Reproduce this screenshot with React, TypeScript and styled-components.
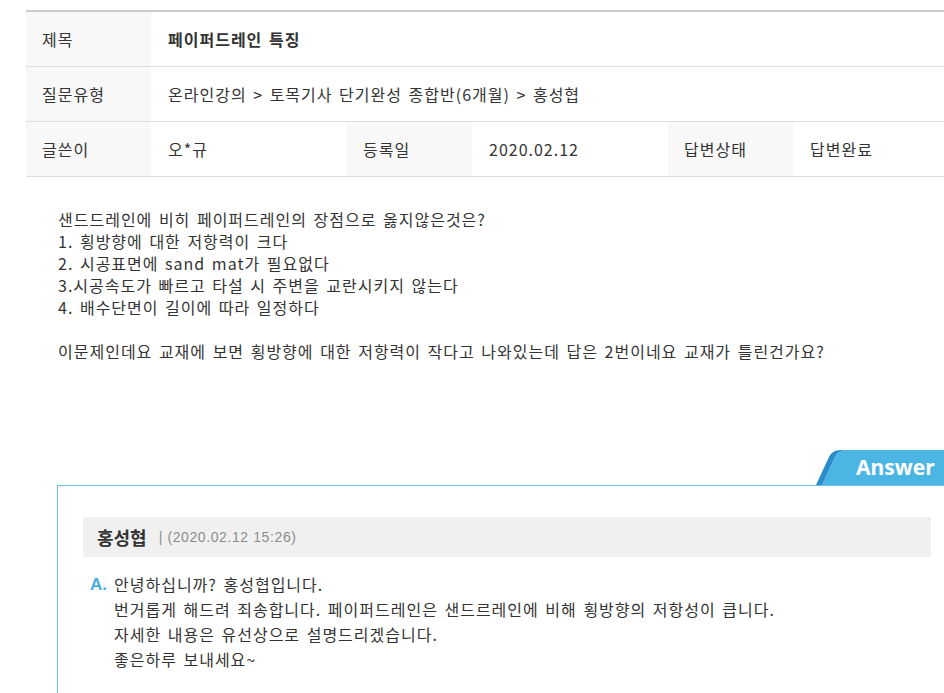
import React from 'react'
import styled, { createGlobalStyle } from 'styled-components'

const GlobalStyle = createGlobalStyle`
  html, body {
    margin: 0;
    padding: 0;
    overflow: hidden;
    background: #FFFFFF;
  }
  body {
    font-family: "Noto Sans CJK KR", "Noto Sans", sans-serif;
    color: #333333;
    letter-spacing: 1px;
    word-spacing: 2px;
  }
`

interface ICell {
  label: string
  value: string
}

const question = [
  '샌드드레인에 비히 페이퍼드레인의 장점으로 옳지않은것은?',
  '1. 횡방향에 대한 저항력이 크다',
  '2. 시공표면에 sand mat가 필요없다',
  '3.시공속도가 빠르고 타설 시 주변을 교란시키지 않는다',
  '4. 배수단면이 길이에 따라 일정하다',
  '',
  '이문제인데요 교재에 보면 횡방향에 대한 저항력이 작다고 나와있는데 답은 2번이네요 교재가 틀린건가요?',
]

const answer = [
  '안녕하십니까? 홍성협입니다.',
  '번거롭게 해드려 죄송합니다. 페이퍼드레인은 샌드르레인에 비해 횡방향의 저항성이 큽니다.',
  '자세한 내용은 유선상으로 설명드리겠습니다.',
  '좋은하루 보내세요~',
]

const infoRow: ICell[] = [
  { label: '글쓴이', value: '오*규' },
  { label: '등록일', value: '2020.02.12' },
  { label: '답변상태', value: '답변완료' },
]

const AnswerTab: React.FC = () => (
  <Tab>
    <svg width="141" height="35" viewBox="0 0 141 35">
      <path d="M6 35 L19 7 Q22.5 0 30 0 L141 0 L141 35 Z" fill="#4BB5E3" />
      <path d="M0 35 L13 7 Q16.5 0 24 0 L30 0 Q22.5 0 19 7 L6 35 Z" fill="#2A8DCB" />
    </svg>
    <TabLabel>Answer</TabLabel>
  </Tab>
)

const App: React.FC = () => {
  return (
    <Page>
      <GlobalStyle />
      <Table>
        <Row>
          <Th>제목</Th>
          <Td bold>페이퍼드레인 특징</Td>
        </Row>
        <Row>
          <Th>질문유형</Th>
          <Td>온라인강의 &gt; 토목기사 단기완성 종합반(6개월) &gt; 홍성협</Td>
        </Row>
        <Row>
          {infoRow.map(({ label, value }) => (
            <React.Fragment key={label}>
              <Th>{label}</Th>
              <Td narrow>{value}</Td>
            </React.Fragment>
          ))}
        </Row>
      </Table>

      <Question>
        {question.map((line, i) => (
          <Line key={i}>{line || '\u00a0'}</Line>
        ))}
      </Question>

      <AnswerBox>
        <AnswerTab />
        <AnswerHead>
          <Writer>홍성협</Writer>
          <AnswerDate>| (2020.02.12 15:26)</AnswerDate>
        </AnswerHead>
        <AnswerBody>
          <Mark>A.</Mark>
          <div>
            {answer.map((line, i) => (
              <AnswerLine key={i}>{line}</AnswerLine>
            ))}
          </div>
        </AnswerBody>
      </AnswerBox>
    </Page>
  )
}

export default App

const Page = styled.div`
  width: 931px;
  padding: 10px 0 0 26px;
`

const Table = styled.div`
  border-top: 2px solid #CCCCCC;
`

const Row = styled.div`
  display: flex;
  height: 54px;
  border-bottom: 1px solid #E0E0E0;
`

const Th = styled.div`
  flex: 0 0 125px;
  display: flex;
  align-items: center;
  padding-left: 16px;
  box-sizing: border-box;
  background: #F8F8F8;
  font-size: 16px;
  color: #333333;
`

const Td = styled.div<{ bold?: boolean; narrow?: boolean }>`
  flex: ${({ narrow }) => (narrow ? '0 0 196px' : '1 1 auto')};
  display: flex;
  align-items: center;
  padding-left: 17px;
  box-sizing: border-box;
  font-size: 16px;
  font-weight: ${({ bold }) => (bold ? 700 : 400)};
  color: #333333;

  &:last-child {
    flex: 1 1 auto;
  }
`

const Question = styled.div`
  padding: 31px 0 0 32px;
  font-size: 16px;
  line-height: 22px;
  color: #333333;
`

const Line = styled.div`
  white-space: nowrap;
`

const AnswerBox = styled.div`
  position: relative;
  margin: 123px 0 0 31px;
  border: 1px solid #6CBFE8;
  padding: 31px 25px 40px;
`

const Tab = styled.div`
  position: absolute;
  right: -1px;
  top: -36px;
  width: 141px;
  height: 35px;
  letter-spacing: 0;
  word-spacing: 0;

  svg {
    display: block;
  }
`

const TabLabel = styled.span`
  position: absolute;
  left: 40px;
  top: 3px;
  font-family: "Noto Sans", "Liberation Sans", sans-serif;
  font-weight: 700;
  font-size: 21px;
  line-height: 28px;
  color: #FFFFFF;
`

const AnswerHead = styled.div`
  display: flex;
  align-items: center;
  gap: 12px;
  height: 40px;
  padding-left: 14px;
  background: #F0F0F0;
`

const Writer = styled.span`
  font-size: 18px;
  font-weight: 700;
  color: #333333;
  letter-spacing: 0;
`

const AnswerDate = styled.span`
  font-family: "Liberation Sans", sans-serif;
  font-size: 14px;
  color: #8C8C8C;
  letter-spacing: 0.6px;
  word-spacing: 0;
`

const AnswerBody = styled.div`
  display: flex;
  gap: 7px;
  padding: 15px 0 0 7px;
  font-size: 16px;
  line-height: 25px;
  color: #333333;
`

const Mark = styled.span`
  font-family: "Liberation Sans", sans-serif;
  font-size: 17px;
  font-weight: 700;
  color: #48ADE2;
  letter-spacing: 0;
`

const AnswerLine = styled.div`
  white-space: nowrap;
`
